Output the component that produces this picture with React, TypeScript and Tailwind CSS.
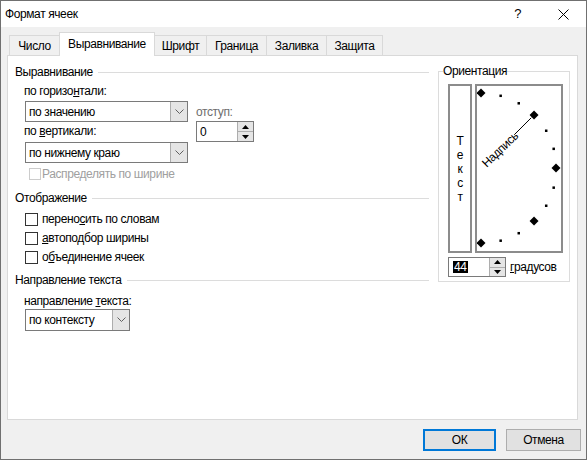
import React from "react";

function Chevron() {
  return (
    <svg width="9" height="6" viewBox="0 0 9 6">
      <path d="M0.5 0.5 L4.5 4.5 L8.5 0.5" stroke="#606060" fill="none" strokeWidth="1" />
    </svg>
  );
}

function Combo({ value, width }: { value: string; width: string }) {
  return (
    <div className={`flex h-[21px] ml-[1px] border border-[#7a7a7a] bg-white ${width}`}>
      <div className="flex-1 flex items-center pl-[3px]">{value}</div>
      <div className="w-[17px] flex items-center justify-center bg-[#e5e5e5] border-l border-[#adadad]">
        <Chevron />
      </div>
    </div>
  );
}

function SpinButtons() {
  return (
    <div className="w-[16px] flex flex-col border-l border-[#adadad]">
      <div className="flex-1 flex items-center justify-center bg-[#e5e5e5] border-b border-[#adadad]">
        <svg width="7" height="4" viewBox="0 0 7 4">
          <path d="M0 4 L3.5 0 L7 4 Z" fill="#000" />
        </svg>
      </div>
      <div className="flex-1 flex items-center justify-center bg-[#e5e5e5]">
        <svg width="7" height="4" viewBox="0 0 7 4">
          <path d="M0 0 L3.5 4 L7 0 Z" fill="#000" />
        </svg>
      </div>
    </div>
  );
}

function Section({ title }: { title: string }) {
  return (
    <div className="flex items-center h-[16px]">
      <span>{title}</span>
      <div className="flex-1 h-px bg-[#dcdcdc] ml-[5px]" />
    </div>
  );
}

function Check({ children }: { children: React.ReactNode }) {
  return (
    <div className="flex items-center h-[16px] ml-[10px]">
      <div className="w-[13px] h-[13px] border border-[#333] bg-white" />
      <span className="ml-[4px]">{children}</span>
    </div>
  );
}

function Dial() {
  const cx = 4;
  const cy = 82;
  const r = 75;
  const marks = [] as React.ReactNode[];
  for (let a = 90; a >= -90; a -= 15) {
    const rad = (a * Math.PI) / 180;
    const x = cx + r * Math.cos(rad);
    const y = cy - r * Math.sin(rad);
    if (a % 45 === 0) {
      marks.push(
        <path key={a} d={`M${x} ${y - 4.5} L${x + 4.5} ${y} L${x} ${y + 4.5} L${x - 4.5} ${y} Z`} fill="#000" />
      );
    } else {
      marks.push(<rect key={a} x={x - 1} y={y - 1} width="2.5" height="2.5" fill="#000" />);
    }
  }
  const c = Math.cos(Math.PI / 4);
  return (
    <svg width="84" height="165" viewBox="0 0 84 165">
      {marks}
      <line x1={cx + 47 * c} y1={cy - 47 * c} x2={cx + 71 * c} y2={cy - 71 * c} stroke="#000" strokeWidth="1" />
      <text
        x={cx + 4}
        y={cy + 4}
        transform={`rotate(-44 ${cx} ${cy})`}
        fontSize="12"
        letterSpacing="-0.4"
        fontFamily="'Liberation Sans', Arial, sans-serif"
        fill="#000"
      >
        Надпись
      </text>
    </svg>
  );
}

export default function App() {
  const tabs = [
    { label: "Число", w: "w-[51px]" },
    { label: "Выравнивание", w: "w-[96px]" },
    { label: "Шрифт", w: "w-[53px]" },
    { label: "Граница", w: "w-[61px]" },
    { label: "Заливка", w: "w-[61px]" },
    { label: "Защита", w: "w-[57px]" },
  ];

  return (
    <div className="w-[587px] h-[460px] bg-[#f0f0f0] border border-[#707070] flex flex-col text-[12px] tracking-[-0.4px] text-black font-['Liberation_Sans',Arial,sans-serif] leading-[16px] overflow-hidden">
      {/* Title bar */}
      <div className="h-[26px] bg-white flex items-center pl-[4px]">
        <span>Формат ячеек</span>
        <div className="ml-auto flex items-center pr-[17px]">
          <span className="text-[13px]">?</span>
          <svg className="ml-[37px]" width="11" height="11" viewBox="0 0 11 11">
            <path d="M0.5 0.5 L10.5 10.5 M10.5 0.5 L0.5 10.5" stroke="#000" strokeWidth="1" />
          </svg>
        </div>
      </div>

      {/* Tabs */}
      <div className="flex items-end h-[23px] mt-[5px] pl-[8px]">
        {tabs.map((t, i) =>
          i === 1 ? (
            <div
              key={t.label}
              className={`${t.w} h-[24px] -mb-px -ml-px relative bg-white border-x border-t border-[#d9d9d9] flex items-center justify-center pb-[1px]`}
            >
              {t.label}
            </div>
          ) : (
            <div
              key={t.label}
              className={`${t.w} h-[20px] ${i === 0 ? "" : "-ml-px"} bg-[#f0f0f0] border-x border-t border-[#d9d9d9] flex items-center justify-center`}
            >
              {t.label}
            </div>
          )
        )}
      </div>

      {/* Panel */}
      <div className="ml-[6px] w-[571px] h-[365px] bg-white border border-[#d9d9d9] flex items-start">
        {/* Left column */}
        <div className="w-[414px] ml-[7px] flex flex-col pt-[8px]">
          <Section title="Выравнивание" />
          <div className="flex pl-[9px] mt-[3px]">
            <div className="flex flex-col">
              <div className="h-[16px] mb-[2px]">
                по горизо<span className="underline">н</span>тали:
              </div>
              <Combo value="по значению" width="w-[163px]" />
              <div className="h-[16px] mt-[1px] mb-[3px]">
                по <span className="underline">в</span>ертикали:
              </div>
              <Combo value="по нижнему краю" width="w-[163px]" />
            </div>
            <div className="flex flex-col ml-[8px] pt-[21px]">
              <div className="h-[16px] text-[#6d6d6d]">отступ:</div>
              <div className="flex w-[58px] h-[21px] mt-[1px] border border-[#7a7a7a] bg-white">
                <div className="flex-1 flex items-center pl-[3px]">0</div>
                <SpinButtons />
              </div>
            </div>
          </div>
          <div className="flex items-center h-[16px] mt-[3px] ml-[14px]">
            <div className="w-[12px] h-[12px] border border-[#cccccc] bg-white" />
            <span className="ml-[1px] text-[#a0a0a0]">Распределять по ширине</span>
          </div>

          <div className="mt-[8px]">
            <Section title="Отображение" />
          </div>
          <div className="flex flex-col gap-[3px] mt-[5px]">
            <Check>
              перено<span className="underline">с</span>ить по словам
            </Check>
            <Check>
              <span className="underline">а</span>втоподбор ширины
            </Check>
            <Check>
              о<span className="underline">б</span>ъединение ячеек
            </Check>
          </div>

          <div className="mt-[7px]">
            <Section title="Направление текста" />
          </div>
          <div className="pl-[9px] mt-[5px] flex flex-col">
            <div className="h-[16px]">
              направление <span className="underline">т</span>екста:
            </div>
            <Combo value="по контексту" width="w-[105px] h-[22px]" />
          </div>
        </div>

        {/* Right column: orientation */}
        <fieldset className="w-[132px] ml-[9px] mt-[7px] border border-[#dcdcdc] pl-[4px] pb-[4px] min-w-0">
          <legend className="px-0 leading-[16px]">Ориентация</legend>
          <div className="ml-[5px] mt-[5px] flex flex-col">
            <div className="flex h-[169px]">
              <div className="w-[24px] border-2 border-[#8c8c8c] flex flex-col items-center justify-center">
                <span className="leading-[14px] h-[14px]">Т</span>
                <span className="leading-[14px] h-[14px]">е</span>
                <span className="leading-[14px] h-[14px]">к</span>
                <span className="leading-[14px] h-[14px]">с</span>
                <span className="leading-[14px] h-[14px]">т</span>
              </div>
              <div className="w-[88px] ml-[3px] border-2 border-[#8c8c8c] bg-white">
                <Dial />
              </div>
            </div>
            <div className="flex items-center mt-[4px]">
              <div className="flex w-[58px] h-[20px] border border-[#7a7a7a] bg-white">
                <div className="flex-1 flex items-center pl-[4px]">
                  <span className="bg-black text-white leading-[12px] px-px">44</span>
                </div>
                <SpinButtons />
              </div>
              <span className="ml-[4px]">
                <span className="underline">г</span>радусов
              </span>
            </div>
          </div>
        </fieldset>
      </div>

      {/* Buttons */}
      <div className="flex justify-end gap-[10px] pr-[5px] mt-[9px]">
        <button className="w-[73px] h-[22px] bg-[#e1e1e1] border-2 border-[#0078d7] flex items-center justify-center">
          ОК
        </button>
        <button className="w-[75px] h-[22px] bg-[#e1e1e1] border border-[#adadad] flex items-center justify-center">
          Отмена
        </button>
      </div>
    </div>
  );
}
